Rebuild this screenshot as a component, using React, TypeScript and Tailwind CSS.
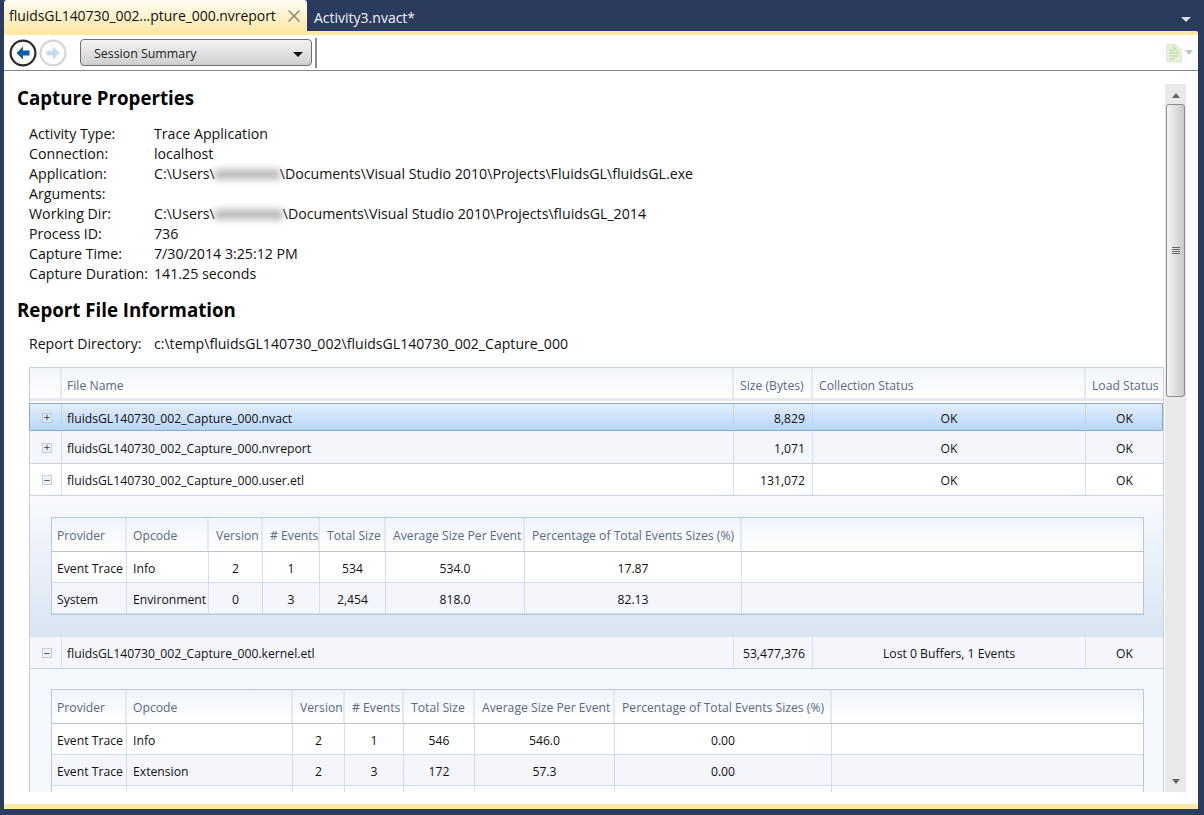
import * as React from "react";
import { X, Plus, Minus } from "lucide-react";

const PROPS: [string, React.ReactNode][] = [
  ["Activity Type:", "Trace Application"],
  ["Connection:", "localhost"],
  ["Application:", <>C:\Users\<Blur />\Documents\Visual Studio 2010\Projects\FluidsGL\fluidsGL.exe</>],
  ["Arguments:", ""],
  ["Working Dir:", <>C:\Users\<Blur wide />\Documents\Visual Studio 2010\Projects\fluidsGL_2014</>],
  ["Process ID:", "736"],
  ["Capture Time:", "7/30/2014 3:25:12 PM"],
  ["Capture Duration:", "141.25 seconds"],
];

const GRID_FILES = "grid grid-cols-[32px_672px_79px_273px_77px]";
const GRID_USER = "grid grid-cols-[75px_82px_54px_57px_66px_139px_217px_1fr]";
const GRID_KERNEL = "grid grid-cols-[75px_166px_52px_59px_71px_140px_217px_1fr]";
const HEADS = ["Provider", "Opcode", "Version", "# Events", "Total Size", "Average Size Per Event", "Percentage of Total Events Sizes (%)", ""];

function Blur({ wide }: { wide?: boolean }) {
  return <span className={`inline-block h-[11px] translate-y-px bg-[#a2a2a2] opacity-70 blur-[3px] ${wide ? "w-[68px]" : "w-[65px]"}`} />;
}

function NavButton({ active, flip }: { active?: boolean; flip?: boolean }) {
  return (
    <svg width="28" height="28" viewBox="0 0 28 28" className={flip ? "ml-[2px]" : ""}>
      <circle cx="14" cy="14" r="12.4" fill="#fff" stroke={active ? "#2a2a2a" : "#d4d4d4"} strokeWidth="2.2" />
      <path
        d={flip ? "M14 7.5 L20.5 14 L14 20.5 V16.5 H7.5 V11.5 H14 Z" : "M14 7.5 L7.5 14 L14 20.5 V16.5 H20.5 V11.5 H14 Z"}
        fill={active ? "#0f5ba8" : "#c3dbf1"}
      />
    </svg>
  );
}

function Expander({ open, soft }: { open?: boolean; soft?: boolean }) {
  const Icon = open ? Minus : Plus;
  return (
    <span className={`flex h-[10px] w-[10px] items-center justify-center border ${soft ? "border-[#b7c9de] bg-[#dbe7f5]" : "border-[#c3cedc] bg-[#eef2f8]"}`}>
      <Icon size={9} strokeWidth={2.4} className="text-[#333]" />
    </span>
  );
}

function FileRow({ name, size, status, open, selected, alt, tall }: { name: string; size: string; status: string; open?: boolean; selected?: boolean; alt?: boolean; tall?: boolean }) {
  const cellLine = selected ? "border-[#c3d9f2]" : "border-[#d3e2f3]";
  const textTop = selected || tall ? "pt-[5px]" : "pt-[3px]";
  return (
    <div
      className={`${GRID_FILES} items-stretch text-[12.2px] text-[#111] ${
        selected
          ? "-ml-px mt-[2px] h-[28px] rounded-[1px] border border-[#86a8d4] bg-gradient-to-b from-[#e3eefc] to-[#b9d5f8]"
          : `${tall ? "h-[33px]" : "h-[32px]"} border-b border-[#c6d2e1] ${alt ? "bg-[#f4f6fb]" : "bg-white"}`
      }`}
    >
      <div className={`flex items-center justify-center border-r pl-[3px] pt-px ${cellLine}`}>
        <Expander open={open} soft={selected} />
      </div>
      <div className={`flex items-center border-r pl-[5px] ${textTop} ${cellLine}`}>{name}</div>
      <div className={`flex items-center justify-end border-r pr-[7px] ${textTop} ${cellLine}`}>{size}</div>
      <div className={`flex items-center justify-center border-r ${textTop} ${cellLine}`}>{status}</div>
      <div className={`flex items-center justify-center ${textTop}`}>OK</div>
    </div>
  );
}

function HeaderCell({ children, last, pad, top }: { children?: React.ReactNode; last?: boolean; pad?: string; top?: string }) {
  return (
    <div className={`flex items-center whitespace-nowrap text-[#5a6a80] ${top ?? "pt-[4px]"} ${pad ?? "pl-[5px]"} ${last ? "" : "border-r-2 border-[#e3e9f1]"}`}>
      {children}
    </div>
  );
}

function EventTable({ grid, rows }: { grid: string; rows: string[][] }) {
  return (
    <div className="border border-[#bcc8d8] text-[12.2px]">
      <div className={`${grid} h-[34px] border-b border-[#bcc3d3] bg-gradient-to-b from-[#eff4fc] to-white`}>
        {HEADS.map((h, i) => (
          <HeaderCell key={i} last={i === HEADS.length - 1} pad={i === 0 ? "pl-[5px]" : i === 1 ? "pl-[6px]" : "pl-[7px]"}>
            {h}
          </HeaderCell>
        ))}
      </div>
      {rows.map((r, i) => (
        <div key={i} className={`${grid} h-[31px] border-b border-[#cfdff1] text-[#111] ${i % 2 ? "bg-[#f4f6fb]" : "bg-white"}`}>
          {r.map((c, j) => (
            <div key={j} className={`flex items-center whitespace-nowrap pt-[4px] ${j === 0 ? "pl-[5px]" : j === 1 ? "pl-[6px]" : "justify-center"} ${j < 7 ? "border-r border-[#cfdff1]" : ""}`}>
              {c}
            </div>
          ))}
        </div>
      ))}
    </div>
  );
}

export default function App() {
  return (
    <div className="flex h-[815px] w-[1204px] flex-col overflow-hidden bg-[#2b3b5e] pl-1 pr-1.5 font-['Open_Sans','Liberation_Sans',sans-serif]">
      {/* tab strip */}
      <div className="flex h-[31px] shrink-0 items-end pt-1">
        <div className="flex h-[31px] w-[303px] items-center rounded-t-[3px] bg-gradient-to-b from-[#fffdf6] to-[#fde8a6] pl-[5px] pb-px text-[14px] tracking-[-0.05px] text-[#111]">
          <span className="flex-1 whitespace-nowrap">fluidsGL140730_002...pture_000.nvreport</span>
          <X size={20} strokeWidth={2} className="mr-[3px] mt-[2px] text-[#8d8a74]" />
        </div>
        <div className="flex h-[27px] flex-1 items-center pl-[7px] text-[14px] text-[#f2f5fa]">
          <span className="flex-1">Activity3.nvact*</span>
          <span className="mr-[7px] mt-[4px] h-0 w-0 border-x-[5px] border-t-[5px] border-x-transparent border-t-[#d8dee9]" />
        </div>
      </div>
      <div className="h-1 shrink-0 rounded-tr-[2px] bg-[#fde8a6]" />

      {/* toolbar */}
      <div className="flex h-[36px] shrink-0 items-center border-b border-[#7f8a8c] bg-white pl-[5px] pr-[4px]">
        <NavButton active />
        <NavButton flip />
        <div className="ml-[13px] flex h-[27px] w-[232px] items-center justify-between rounded-[4px] border border-[#6f6f6f] bg-gradient-to-b from-[#f4f4f4] to-[#cfcfcf] pl-[13px] pr-[8px] pt-[3px] text-[12.4px] text-[#222]">
          <span>Session Summary</span>
          <span className="h-0 w-0 border-x-[5px] border-t-[5px] border-x-transparent border-t-[#111]" />
        </div>
        <div className="ml-[3px] h-[30px] w-[2px] bg-[#8b8b8b]" />
        <div className="flex-1" />
        <svg width="18" height="20" viewBox="0 0 18 20" className="opacity-70">
          <path d="M1.5 1.5 H11 L16.5 7 V19 H1.5 Z" fill="#dcefc9" stroke="#d3dfc6" />
          <path d="M4 7 H9 M4 10 H13 M4 13 H13 M4 16 H10 M8 3 L14 11" stroke="#b4cf96" strokeWidth="1.3" fill="none" />
        </svg>
        <span className="ml-[2px] mr-[1px] h-0 w-0 border-x-[4px] border-t-[5px] border-x-transparent border-t-[#c3c3c3]" />
      </div>

      {/* report body */}
      <div className="flex h-[733px] shrink-0 bg-white">
        <div className="h-[721px] w-[1161px] overflow-hidden">
          <h2 className="mt-[13px] flex h-[28px] items-center pl-[13px] text-[18.7px] font-bold text-black">Capture Properties</h2>
          <div className="mt-3 pl-[25px] text-[14.2px] text-[#111]">
            {PROPS.map(([label, value]) => (
              <div key={label} className="flex h-5 items-center whitespace-nowrap">
                <span className="w-[125px] shrink-0">{label}</span>
                <span>{value}</span>
              </div>
            ))}
          </div>
          <h2 className="mt-3 flex h-[28px] items-center pl-[13px] text-[18.7px] font-bold text-black">Report File Information</h2>
          <div className="mt-[10px] flex h-5 items-center pl-[25px] text-[14.1px] text-[#111]">
            <span className="w-[125px]">Report Directory:</span>
            <span>c:\temp\fluidsGL140730_002\fluidsGL140730_002_Capture_000</span>
          </div>

          <div className="ml-[25px] mt-[13px] w-[1135px] border-x border-t border-[#c6d0dd]">
            <div className={`${GRID_FILES} h-[33px] border-b-[3px] border-[#e4e8ee] bg-gradient-to-b from-[#f1f5fb] to-white text-[12.2px]`}>
              <HeaderCell />
              <HeaderCell top="pt-[7px]">File Name</HeaderCell>
              <HeaderCell top="pt-[7px]" pad="pl-[6px]">Size (Bytes)</HeaderCell>
              <HeaderCell top="pt-[7px]" pad="pl-[6px]">Collection Status</HeaderCell>
              <HeaderCell top="pt-[7px]" last pad="pl-[6px]">Load Status</HeaderCell>
            </div>
            <FileRow name="fluidsGL140730_002_Capture_000.nvact" size="8,829" status="OK" selected />
            <FileRow name="fluidsGL140730_002_Capture_000.nvreport" size="1,071" status="OK" alt tall />
            <FileRow name="fluidsGL140730_002_Capture_000.user.etl" size="131,072" status="OK" open />
            <div className="h-[141px] bg-gradient-to-b from-[#f8fafe] to-[#d9e5f3] pl-[21px] pr-[19px] pt-[21px]">
              <EventTable
                grid={GRID_USER}
                rows={[
                  ["Event Trace", "Info", "2", "1", "534", "534.0", "17.87", ""],
                  ["System", "Environment", "0", "3", "2,454", "818.0", "82.13", ""],
                ]}
              />
            </div>
            <FileRow name="fluidsGL140730_002_Capture_000.kernel.etl" size="53,477,376" status="Lost 0 Buffers, 1 Events" open alt />
            <div className="h-[200px] bg-[#f5f9fe] pl-[21px] pr-[19px] pt-[20px]">
              <EventTable
                grid={GRID_KERNEL}
                rows={[
                  ["Event Trace", "Info", "2", "1", "546", "546.0", "0.00", ""],
                  ["Event Trace", "Extension", "2", "3", "172", "57.3", "0.00", ""],
                  ["", "", "", "", "", "", "", ""],
                ]}
              />
            </div>
          </div>
        </div>

        {/* scrollbar */}
        <div className="mt-[13px] flex h-[708px] w-[21px] flex-col items-center bg-[#e9e9e9]">
          <span className="mt-[9px] h-0 w-0 border-x-[4px] border-b-[5px] border-x-transparent border-b-[#666]" />
          <div className="mt-[6px] flex h-[293px] w-[19px] shrink-0 items-center justify-center rounded-[3px] border border-[#8d8d8d] bg-gradient-to-r from-[#f4f4f4] to-[#c9c9c9]">
            <div className="flex flex-col gap-px">
              <span className="h-px w-[8px] bg-[#666]" />
              <span className="h-px w-[8px] bg-[#666]" />
              <span className="h-px w-[8px] bg-[#666]" />
              <span className="h-px w-[8px] bg-[#666]" />
            </div>
          </div>
          <div className="flex-1" />
          <span className="mb-[8px] h-0 w-0 border-x-[4px] border-t-[5px] border-x-transparent border-t-[#666]" />
        </div>
        <div className="flex-1" />
      </div>
      <div className="h-[5px] shrink-0 bg-[#fde8a6]" />
    </div>
  );
}
